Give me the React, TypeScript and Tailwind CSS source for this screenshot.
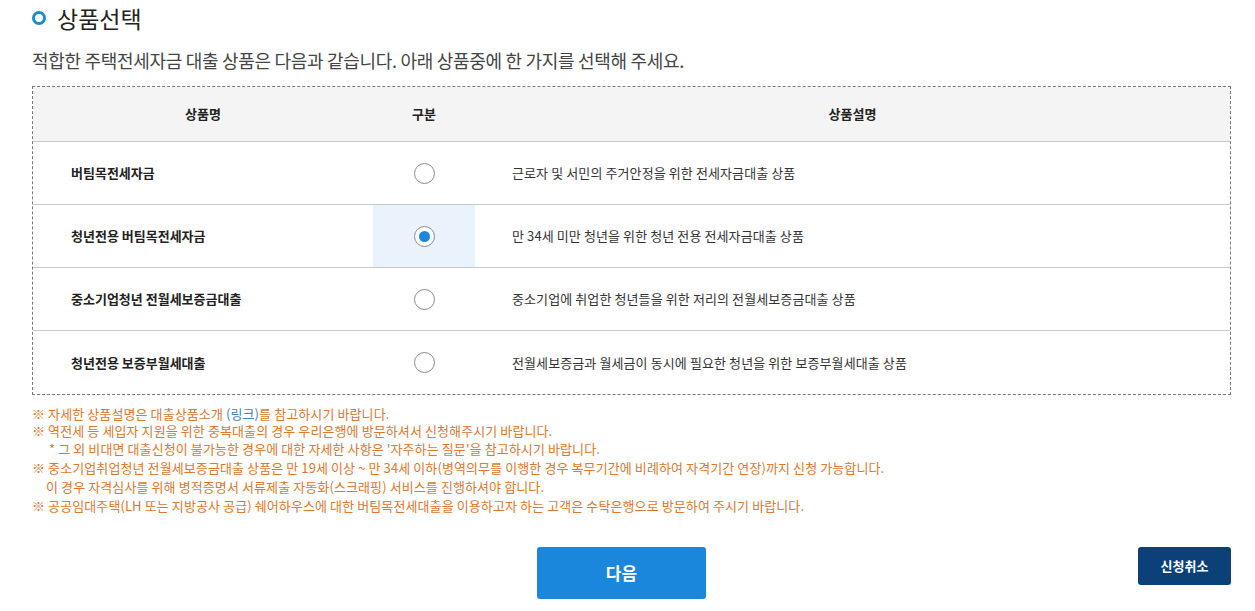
import { useState } from 'react'

const products = [
  { name: '버팀목전세자금', desc: '근로자 및 서민의 주거안정을 위한 전세자금대출 상품' },
  { name: '청년전용 버팀목전세자금', desc: '만 34세 미만 청년을 위한 청년 전용 전세자금대출 상품' },
  { name: '중소기업청년 전월세보증금대출', desc: '중소기업에 취업한 청년들을 위한 저리의 전월세보증금대출 상품' },
  { name: '청년전용 보증부월세대출', desc: '전월세보증금과 월세금이 동시에 필요한 청년을 위한 보증부월세대출 상품' },
]

const App = () => {
  const [selected, setSelected] = useState(1)

  return (
    <div className="w-[1255px] h-[611px] bg-white pl-[32px] pr-[24px] font-['Noto_Sans_CJK_KR',sans-serif] text-[#333] overflow-hidden">
      <div className="flex items-center gap-[11px] h-[34px] pt-[2px]">
        <span className="w-[14px] h-[14px] rounded-full border-[3px] border-[#1e8ad6]"></span>
        <h2 className="text-[23px] leading-none text-[#222]">상품선택</h2>
      </div>

      <p className="mt-[13px] text-[18px] leading-[26px] text-[#444] tracking-[-0.3px]">
        적합한 주택전세자금 대출 상품은 다음과 같습니다. 아래 상품중에 한 가지를 선택해 주세요.
      </p>

      <div className="mt-[13px] border border-dashed border-[#777]">
        <div className="grid grid-cols-[340px_102px_1fr] h-[55px] bg-[#f4f4f4] border-b border-[#c8c8c8] text-[13px] font-bold text-[#222]">
          <div className="flex items-center justify-center">상품명</div>
          <div className="flex items-center justify-center">구분</div>
          <div className="flex items-center justify-center">상품설명</div>
        </div>
        {products.map((p, i) => (
          <div
            key={p.name}
            className={`grid grid-cols-[340px_102px_1fr] h-[63px] text-[13px] ${i < products.length - 1 ? 'border-b border-[#c8c8c8]' : ''}`}
          >
            <div className="flex items-center pl-[38px] font-bold text-[#222]">{p.name}</div>
            <div className={`flex items-center justify-center ${selected === i ? 'bg-[#eaf3fb]' : ''}`}>
              <button
                onClick={() => setSelected(i)}
                className="w-[21px] h-[21px] rounded-full border border-[#8a8a8a] bg-white flex items-center justify-center cursor-pointer"
              >
                {selected === i && <span className="w-[11px] h-[11px] rounded-full bg-[#1e86dc]"></span>}
              </button>
            </div>
            <div className="flex items-center pl-[37px] text-[#333] tracking-[0.1px]">{p.desc}</div>
          </div>
        ))}
      </div>

      <div className="mt-[10px] text-[13px] text-[#e0772a] tracking-[0.1px]">
        <p className="leading-[17px]">
          ※ 자세한 상품설명은 대출상품소개 <span className="text-[#3d7fc9]">(링크)</span>를 참고하시기 바랍니다.
        </p>
        <p className="leading-[17px]">※ 역전세 등 세입자 지원을 위한 중복대출의 경우 우리은행에 방문하셔서 신청해주시기 바랍니다.</p>
        <p className="pl-[17px] mt-[1px] leading-[18px]">* 그 외 비대면 대출신청이 불가능한 경우에 대한 자세한 사항은 '자주하는 질문'을 참고하시기 바랍니다.</p>
        <p className="leading-[19px]">
          ※ 중소기업취업청년 전월세보증금대출 상품은 만 19세 이상 ~ 만 34세 이하(병역의무를 이행한 경우 복무기간에 비례하여 자격기간 연장)까지 신청 가능합니다.
        </p>
        <p className="pl-[14px] leading-[19px]">이 경우 자격심사를 위해 병적증명서 서류제출 자동화(스크래핑) 서비스를 진행하셔야 합니다.</p>
        <p className="leading-[20px]">
          ※ 공공임대주택(LH 또는 지방공사 공급) 쉐어하우스에 대한 버팀목전세대출을 이용하고자 하는 고객은 수탁은행으로 방문하여 주시기 바랍니다.
        </p>
      </div>

      <div className="mt-[31px] flex items-start">
        <button className="ml-[505px] w-[169px] h-[52px] rounded-[3px] bg-[#1a87dd] text-white text-[17px] font-bold">다음</button>
        <button className="ml-auto w-[93px] h-[38px] rounded-[3px] bg-[#0c4079] text-white text-[13px] font-bold">신청취소</button>
      </div>
    </div>
  )
}

export default App
